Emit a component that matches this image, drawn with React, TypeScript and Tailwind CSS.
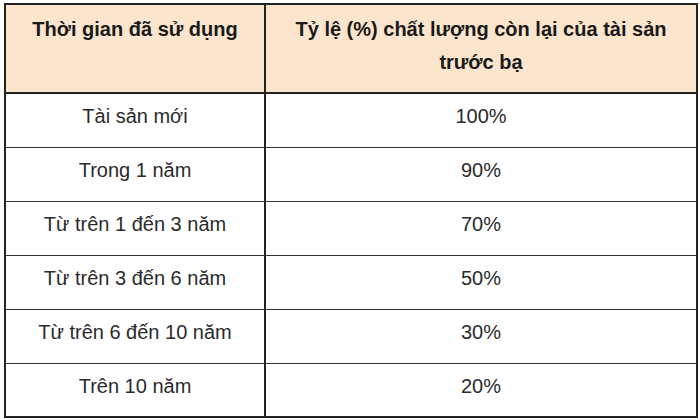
const ROWS: { period: string; rate: string }[] = [
  { period: "Tài sản mới", rate: "100%" },
  { period: "Trong 1 năm", rate: "90%" },
  { period: "Từ trên 1 đến 3 năm", rate: "70%" },
  { period: "Từ trên 3 đến 6 năm", rate: "50%" },
  { period: "Từ trên 6 đến 10 năm", rate: "30%" },
  { period: "Trên 10 năm", rate: "20%" },
];

export default function App() {
  return (
    <div className="w-[700px] h-[420px] bg-white pl-[4px] pt-[3px] font-['Liberation_Sans',Arial,sans-serif] text-[20px]">
      <table className="w-[694px] border-collapse border-2 border-[#222]">
        <thead>
          <tr className="bg-[#fce5cd] h-[89px]">
            <th className="w-[260px] border-2 border-[#222] px-3 pt-[8px] align-top font-bold text-[#1a1a1a] leading-[33px]">
              Thời gian đã sử dụng
            </th>
            <th className="border-2 border-[#222] px-3 pt-[8px] align-top font-bold text-[#1a1a1a] leading-[33px]">
              Tỷ lệ (%) chất lượng còn lại của tài sản
              <br />
              trước bạ
            </th>
          </tr>
        </thead>
        <tbody>
          {ROWS.map((r) => (
            <tr key={r.period} className="h-[54px]">
              <td className="border border-[#333] px-3 pt-[8px] align-top text-center text-[#2b2b2b] leading-[28px]">
                {r.period}
              </td>
              <td className="border border-[#333] border-l-2 border-l-[#222] px-3 pt-[8px] align-top text-center text-[#2b2b2b] leading-[28px]">
                {r.rate}
              </td>
            </tr>
          ))}
        </tbody>
      </table>
    </div>
  );
}
